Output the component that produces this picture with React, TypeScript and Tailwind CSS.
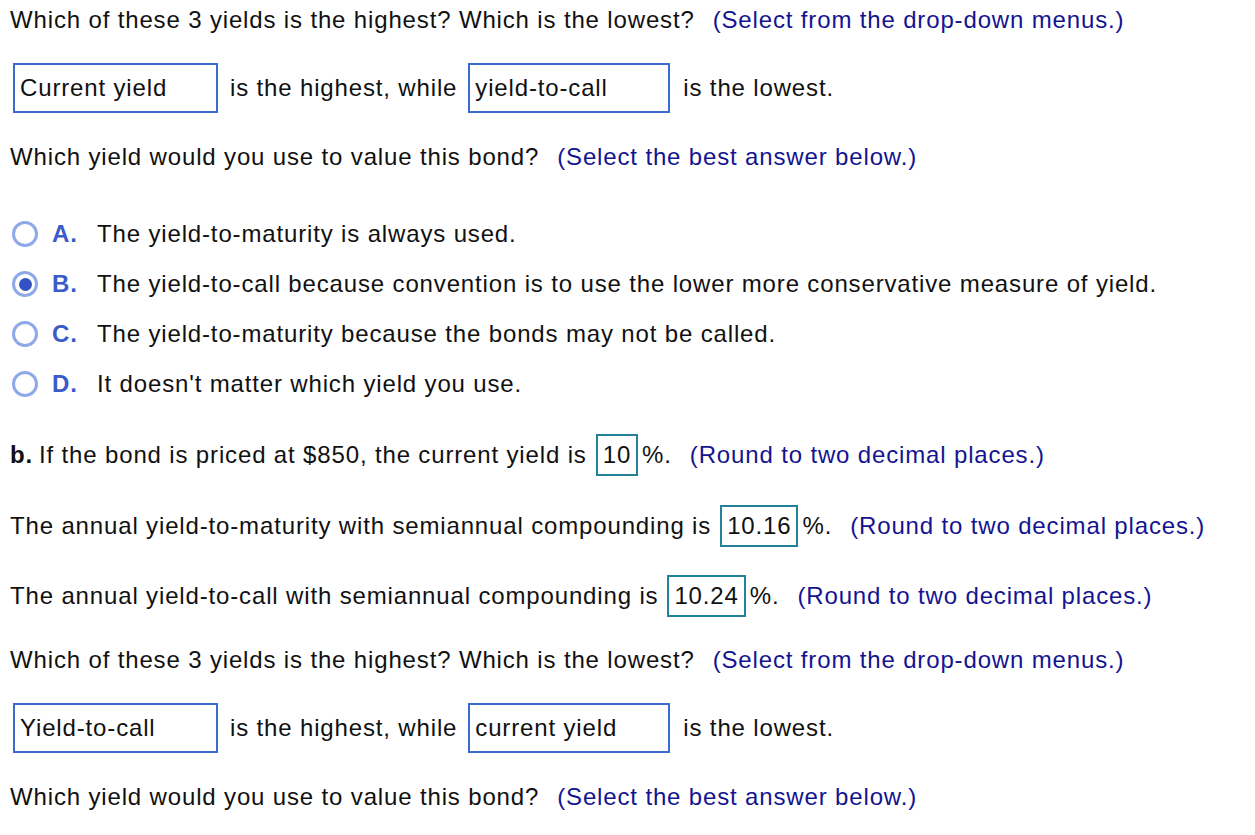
import React from "react";

const Hint = ({ children }: { children: React.ReactNode }) => (
  <span className="text-[#141490] ml-[18px]">{children}</span>
);

const Select = ({ value, w }: { value: string; w: string }) => (
  <div className={`${w} h-[50px] border-2 border-[#3a6ccf] flex items-center pl-[5px] shrink-0`}>
    {value}
  </div>
);

const NumBox = ({ value }: { value: string }) => (
  <span className="inline-flex items-center h-[42px] px-[5px] border-2 border-[#24819b] ml-[9px] mr-[4px]">
    {value}
  </span>
);

const Radio = ({ checked }: { checked?: boolean }) => (
  <span className="w-[26px] h-[26px] rounded-full border-[3px] border-[#8ea8e8] flex items-center justify-center shrink-0">
    {checked && <span className="w-[13px] h-[13px] rounded-full bg-[#3252c6]" />}
  </span>
);

const Option = ({ letter, text, checked }: { letter: string; text: string; checked?: boolean }) => (
  <div className="h-[50px] flex items-center pl-[12px]">
    <Radio checked={checked} />
    <span className="font-bold text-[#3a5bc8] ml-[14px] w-[45px]">{letter}.</span>
    <span>{text}</span>
  </div>
);

const SelectRow = ({ a, b }: { a: string; b: string }) => (
  <div className="flex items-center h-[50px] pl-[13px]">
    <Select value={a} w="w-[205px]" />
    <span className="ml-[12px] mr-[11px]">is the highest, while</span>
    <Select value={b} w="w-[202px]" />
    <span className="ml-[13px]">is the lowest.</span>
  </div>
);

export default function App() {
  return (
    <div
      className="w-[1255px] h-[835px] bg-white text-[#111] text-[24px] tracking-[0.85px] overflow-hidden pl-[10px]"
      style={{ fontFamily: '"Liberation Sans", Arial, sans-serif' }}
    >
      <div className="h-[40px] flex items-center">
        Which of these 3 yields is the highest? Which is the lowest?
        <Hint>(Select from the drop-down menus.)</Hint>
      </div>
      <div className="mt-[23px] -ml-[10px]">
        <SelectRow a="Current yield" b="yield-to-call" />
      </div>
      <div className="mt-[24px] h-[40px] flex items-center">
        Which yield would you use to value this bond?
        <Hint>(Select the best answer below.)</Hint>
      </div>
      <div className="mt-[32px] -ml-[10px]">
        <Option letter="A" text="The yield-to-maturity is always used." />
        <Option
          letter="B"
          checked
          text="The yield-to-call because convention is to use the lower more conservative measure of yield."
        />
        <Option letter="C" text="The yield-to-maturity because the bonds may not be called." />
        <Option letter="D" text="It doesn't matter which yield you use." />
      </div>
      <div className="mt-[25px] h-[42px] flex items-center">
        <span className="font-bold">b.</span>
        <span className="ml-[6px]">If the bond is priced at $850, the current yield is</span>
        <NumBox value="10" />
        %.
        <Hint>(Round to two decimal places.)</Hint>
      </div>
      <div className="mt-[30px] h-[40px] flex items-center">
        The annual yield-to-maturity with semiannual compounding is
        <NumBox value="10.16" />
        %.
        <Hint>(Round to two decimal places.)</Hint>
      </div>
      <div className="mt-[30px] h-[40px] flex items-center">
        The annual yield-to-call with semiannual compounding is
        <NumBox value="10.24" />
        %.
        <Hint>(Round to two decimal places.)</Hint>
      </div>
      <div className="mt-[24px] h-[40px] flex items-center">
        Which of these 3 yields is the highest? Which is the lowest?
        <Hint>(Select from the drop-down menus.)</Hint>
      </div>
      <div className="mt-[23px] -ml-[10px]">
        <SelectRow a="Yield-to-call" b="current yield" />
      </div>
      <div className="mt-[24px] h-[40px] flex items-center">
        Which yield would you use to value this bond?
        <Hint>(Select the best answer below.)</Hint>
      </div>
    </div>
  );
}
